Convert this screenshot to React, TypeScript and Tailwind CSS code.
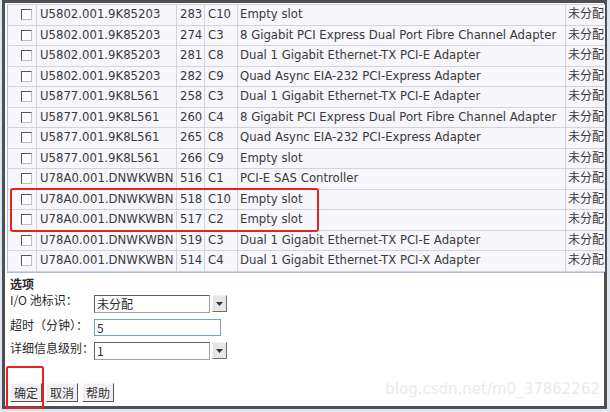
import React from "react";

const rows = [
  ["U5802.001.9K85203", "283", "C10", "Empty slot"],
  ["U5802.001.9K85203", "274", "C3", "8 Gigabit PCI Express Dual Port Fibre Channel Adapter"],
  ["U5802.001.9K85203", "281", "C8", "Dual 1 Gigabit Ethernet-TX PCI-E Adapter"],
  ["U5802.001.9K85203", "282", "C9", "Quad Async EIA-232 PCI-Express Adapter"],
  ["U5877.001.9K8L561", "258", "C3", "Dual 1 Gigabit Ethernet-TX PCI-E Adapter"],
  ["U5877.001.9K8L561", "260", "C4", "8 Gigabit PCI Express Dual Port Fibre Channel Adapter"],
  ["U5877.001.9K8L561", "265", "C8", "Quad Async EIA-232 PCI-Express Adapter"],
  ["U5877.001.9K8L561", "266", "C9", "Empty slot"],
  ["U78A0.001.DNWKWBN", "516", "C1", "PCI-E SAS Controller"],
  ["U78A0.001.DNWKWBN", "518", "C10", "Empty slot"],
  ["U78A0.001.DNWKWBN", "517", "C2", "Empty slot"],
  ["U78A0.001.DNWKWBN", "519", "C3", "Dual 1 Gigabit Ethernet-TX PCI-E Adapter"],
  ["U78A0.001.DNWKWBN", "514", "C4", "Dual 1 Gigabit Ethernet-TX PCI-X Adapter"],
];

const latin = "font-['DejaVu_Sans','Noto_Sans_CJK_SC',sans-serif]";
const cjk = "font-['Noto_Sans_CJK_SC',sans-serif]";

function Check() {
  return (
    <span className="block w-[11px] h-[11px] bg-white border border-[#c0c0c0] border-t-[#555] border-l-[#555]" />
  );
}

function Select({ value }: { value: string }) {
  return (
    <div className="flex items-center gap-[2px]">
      <div className={`w-[116px] h-[18px] bg-white border border-[#a0a0a0] border-t-[#606060] border-l-[#606060] px-[2px] text-[12px] leading-[16px] ${cjk}`}>
        {value}
      </div>
      <div className="w-[15px] h-[17px] bg-[#e6e6e6] border border-[#f4f4f4] border-r-[#707070] border-b-[#707070] flex items-center justify-center">
        <svg width="7" height="4" viewBox="0 0 7 4"><path d="M0 0h7L3.5 4z" fill="#333" /></svg>
      </div>
    </div>
  );
}

function Btn({ label }: { label: string }) {
  return (
    <button className={`h-[19px] px-[3px] bg-[#f0f0f4] border border-[#fafafa] border-r-[#555] border-b-[#555] text-[12px] leading-[15px] text-[#333] ${cjk}`}>
      {label}
    </button>
  );
}

const cell = "border border-[#d3d3dc] p-0 whitespace-nowrap overflow-hidden";

export default function App() {
  return (
    <div className="w-[610px] h-[412px] bg-[#dfe7f3] relative overflow-hidden">
      <div className="ml-[2px] w-[605px] h-[409px] border-[3px] border-[#4f4f4f] bg-white relative">
        <table className={`ml-[2px] mt-[1px] w-[597px] table-fixed border-collapse text-[11.7px] leading-[19px] text-[#3a3a3a] ${latin}`}>
          <colgroup>
            <col className="w-[29px]" />
            <col className="w-[140px]" />
            <col className="w-[28px]" />
            <col className="w-[33px]" />
            <col className="w-[328px]" />
            <col className="w-[39px]" />
          </colgroup>
          <tbody>
            {rows.map((r, i) => (
              <tr key={i} className="h-[20.5px] bg-[#f6f6fb]">
                <td className={`${cell} border-l-[#a9bbdc] pl-[13px]`}><Check /></td>
                <td className={`${cell} pl-[3px]`}>{r[0]}</td>
                <td className={`${cell} pl-[3px]`}>{r[1]}</td>
                <td className={`${cell} pl-[3px]`}>{r[2]}</td>
                <td className={`${cell} pl-[2px]`}>{r[3]}</td>
                <td className={`${cell} border-r-0 pl-[2px] text-[12px] leading-[14px] align-top pt-[1px] ${cjk}`}>未分配</td>
              </tr>
            ))}
          </tbody>
        </table>
        <div className="h-[1px] ml-[2px] w-[597px] bg-[#a9bbdc]" />
        <div className={`pl-[5px] pt-[3px] text-[12px] text-[#2a2a2a] ${cjk}`}>
          <div className="font-bold leading-[16px]">选项</div>
          <div className="flex">
            <div className="w-[84px] leading-[16px]">I/O 池标识：</div>
            <div className="mt-[3px]"><Select value="未分配" /></div>
          </div>
          <div className="flex mt-[4px]">
            <div className="w-[84px] leading-[16px]">超时（分钟）：</div>
            <div className="mt-[2px] w-[127px] h-[17px] bg-white border border-[#7aa0c8] px-[2px] text-[12px] leading-[15px]">5</div>
          </div>
          <div className="flex mt-[4px]">
            <div className="w-[84px] leading-[16px]">详细信息级别：</div>
            <div className="mt-[2px]"><Select value="1" /></div>
          </div>
          <div className="flex gap-[4px] mt-[23px]">
            <Btn label="确定" />
            <Btn label="取消" />
            <Btn label="帮助" />
          </div>
        </div>
        <div className={`absolute right-[4px] bottom-[6px] text-[15px] text-[#ebebeb] ${latin}`}>blog.csdn.net/m0_37862262</div>
      </div>
      <div className="absolute left-[10px] top-[188px] w-[309px] h-[44px] border-2 border-[#e8231f] rounded-[3px]" />
      <div className="absolute left-[6px] top-[366px] w-[38px] h-[43px] border-2 border-[#e8231f] rounded-[2px]" />
    </div>
  );
}
